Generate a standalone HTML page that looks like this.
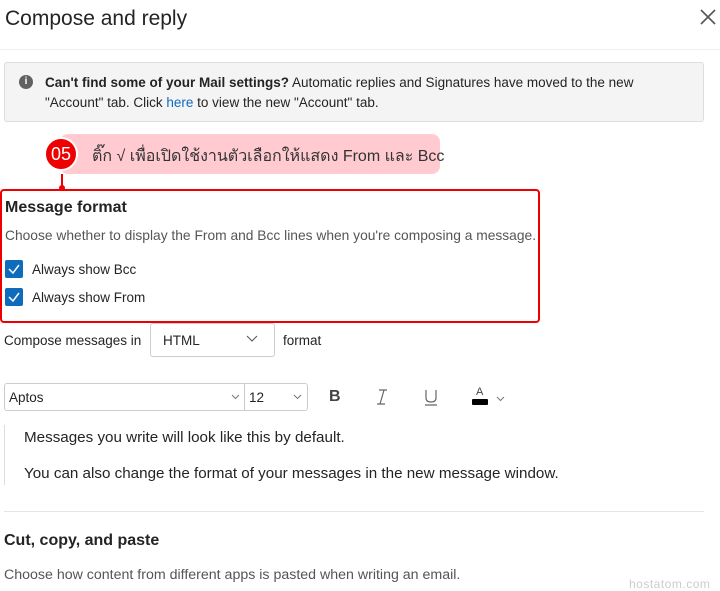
<!DOCTYPE html>
<html><head><meta charset="utf-8"><style>
body{margin:0;width:720px;height:591px;background:#fff;font-family:"Liberation Sans","Noto Sans CJK SC",sans-serif;color:#242424;position:relative;overflow:hidden}
.a{position:absolute;white-space:nowrap}
</style></head><body>
<div class="a" style="left:5px;top:7px;font-size:21px;color:#242424">Compose and reply</div>
<svg class="a" style="left:699px;top:8px" width="18" height="18"><path d="M2 2L16 16M16 2L2 16" stroke="#555" stroke-width="1.6"/></svg>
<div class="a" style="left:0;top:49px;width:720px;height:1px;background:#eee"></div>
<div class="a" style="left:4px;top:62px;width:698px;height:58px;background:#f4f4f4;border:1px solid #ddd;border-radius:3px"></div>
<div class="a" style="left:19px;top:75px;width:14px;height:14px;border-radius:50%;background:#616161;color:#fff;font-size:10px;text-align:center;line-height:14px;font-weight:bold">i</div>
<div class="a" style="left:45px;top:73px;font-size:13.5px;line-height:20px;white-space:normal;width:610px"><b>Can't find some of your Mail settings?</b> Automatic replies and Signatures have moved to the new "Account" tab. Click <span style="color:#0f6cbd">here</span> to view the new "Account" tab.</div>
<div class="a" style="left:60px;top:134px;width:380px;height:40px;background:#ffcbd1;border-radius:8px"></div>
<div class="a" style="left:44px;top:137px;width:34px;height:34px;border-radius:50%;background:#e00;border:2px solid #fff;box-sizing:border-box;color:#fff;font-size:18px;line-height:30px;text-align:center">05</div>
<div class="a" style="left:92px;top:144px;font-size:16px;color:#333">ติ๊ก √ เพื่อเปิดใช้งานตัวเลือกให้แสดง From และ Bcc</div>
<div class="a" style="left:61px;top:174px;width:2px;height:16px;background:#e00"></div>
<div class="a" style="left:59px;top:185px;width:6px;height:6px;border-radius:50%;background:#e00"></div>
<div class="a" style="left:0;top:189px;width:536px;height:130px;border:2px solid #e00;border-radius:4px"></div>
<div class="a" style="left:5px;top:199px;font-size:16px;font-weight:bold">Message format</div>
<div class="a" style="left:5px;top:228px;font-size:13.8px;color:#555">Choose whether to display the From and Bcc lines when you're composing a message.</div>
<div class="a" style="left:5px;top:260px;width:18px;height:18px;background:#0f6cbd;border-radius:2px"><svg width="18" height="18"><path d="M4 9L8 13L14 5" fill="none" stroke="#fff" stroke-width="1.5"/></svg></div>
<div class="a" style="left:32px;top:262px;font-size:13.5px">Always show Bcc</div>
<div class="a" style="left:5px;top:288px;width:18px;height:18px;background:#0f6cbd;border-radius:2px"><svg width="18" height="18"><path d="M4 9L8 13L14 5" fill="none" stroke="#fff" stroke-width="1.5"/></svg></div>
<div class="a" style="left:32px;top:290px;font-size:13.5px">Always show From</div>
<div class="a" style="left:4px;top:333px;font-size:13.5px">Compose messages in</div>
<div class="a" style="left:150px;top:323px;width:123px;height:32px;border:1px solid #ccc;border-radius:3px"></div>
<div class="a" style="left:163px;top:333px;font-size:13.5px">HTML</div>
<svg class="a" style="left:246px;top:335px" width="12" height="8"><path d="M1 1L6 6L11 1" fill="none" stroke="#555"/></svg>
<div class="a" style="left:283px;top:333px;font-size:13.5px">format</div>
<div class="a" style="left:4px;top:383px;width:302px;height:26px;border:1px solid #ccc;border-radius:3px"></div>
<div class="a" style="left:244px;top:384px;width:1px;height:26px;background:#ccc"></div>
<div class="a" style="left:9px;top:390px;font-size:13.5px">Aptos</div>
<div class="a" style="left:249px;top:390px;font-size:13.5px">12</div>
<svg class="a" style="left:231px;top:394px" width="9" height="6"><path d="M1 1L4.5 4.5L8 1" fill="none" stroke="#777"/></svg>
<svg class="a" style="left:293px;top:394px" width="9" height="6"><path d="M1 1L4.5 4.5L8 1" fill="none" stroke="#777"/></svg>
<div class="a" style="left:329px;top:388px;font-size:16px;font-weight:bold;color:#444">B</div>
<svg class="a" style="left:374px;top:389px" width="16" height="16"><path d="M5 1H13M3 15H11M10 1L6 15" fill="none" stroke="#666" stroke-width="1.2"/></svg>
<svg class="a" style="left:423px;top:389px" width="16" height="17"><path d="M3 1V9Q3 13 8 13Q13 13 13 9V1M2 16H14" fill="none" stroke="#666" stroke-width="1.2"/></svg>
<div class="a" style="left:476px;top:386px;font-size:11px;color:#444">A</div>
<div class="a" style="left:472px;top:399px;width:16px;height:6px;background:#000;border-radius:1px"></div>
<svg class="a" style="left:496px;top:396px" width="9" height="6"><path d="M1 1L4.5 4.5L8 1" fill="none" stroke="#777"/></svg>
<div class="a" style="left:4px;top:425px;width:1px;height:60px;background:#ddd"></div>
<div class="a" style="left:24px;top:429px;font-size:15.2px">Messages you write will look like this by default.</div>
<div class="a" style="left:24px;top:465px;font-size:15.2px">You can also change the format of your messages in the new message window.</div>
<div class="a" style="left:4px;top:511px;width:700px;height:1px;background:#e5e5e5"></div>
<div class="a" style="left:4px;top:532px;font-size:16px;font-weight:bold">Cut, copy, and paste</div>
<div class="a" style="left:4px;top:567px;font-size:14.2px;color:#555">Choose how content from different apps is pasted when writing an email.</div>
<div class="a" style="left:629px;top:577px;font-size:12px;color:#ccc;letter-spacing:0.5px">hostatom.com</div>
</body></html>
